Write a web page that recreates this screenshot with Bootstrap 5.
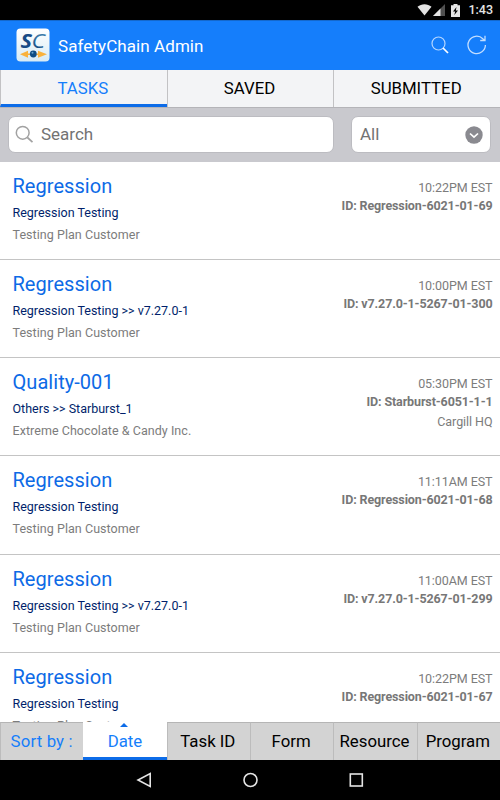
<!DOCTYPE html>
<html lang="en">
<head>
<meta charset="utf-8">
<meta name="viewport" content="width=device-width, initial-scale=1">
<title>SafetyChain Admin</title>
<link href="https://cdn.jsdelivr.net/npm/bootstrap@5.3.0/dist/css/bootstrap.min.css" rel="stylesheet">
<style>
  body { font-family: Roboto, "Liberation Sans", sans-serif; height: 800px; }
  svg { display: block; flex: none; }
  .status-bar { height: 20px; color: #e4e4e4; font-size: 12.5px; font-weight: 500; padding: 0 7px 0 0; }
  .status-signal { margin-left: 1px; }
  .app-bar { height: 50px; background: #157efb; border-top: 1px solid #1468cc; padding: 0 13px 2px 16px; }
  .app-title { font-size: 17px; line-height: 20px; margin: 3px 0 0 8px; letter-spacing: .08px; }
  .refresh-icon { margin-left: 18px; }
  .main-tabs { height: 38px; background: #f3f4f6; border-bottom: 1px solid #b4b4b8; }
  .main-tabs .nav-link { font-size: 16.8px; line-height: 33px; height: 37px; color: #000; border-radius: 0; padding: 2px 2px 0 0; border-left: 1px solid #c2c2c4; }
  .main-tabs .nav-link.active { color: #157efb; border-bottom: 3px solid #0d6ce8; }
  .filter-bar { height: 54px; background: #c9c9ce; padding: 8px 9px 9px 8px; gap: 17px; }
  .field { height: 37px; background: #fff; border: 1px solid #bcbcc1; border-radius: 7px; color: #737373; font-size: 17px; }
  .search-field { width: 326px; padding-left: 6px; }
  .search-field input { font-size: 17px; margin-left: 7px; color: #737373; }
  .search-field input::placeholder { color: #737373; opacity: 1; }
  .type-field { width: 140px; padding: 0 7px 0 8px; }
  .task-list { min-height: 0; }
  .task { height: 98.15px; border-bottom: 1px solid #c4c4c4; padding: 12px 7.5px 0 12.5px; }
  .task-name { font-size: 20px; line-height: 24px; color: #0d6ae6; letter-spacing: .05px; }
  .task-plan { font-size: 12.5px; line-height: 16px; color: #001f6b; margin-top: 7px; }
  .task-customer { font-size: 12.5px; line-height: 16px; color: #7c7c7c; margin-top: 6px; letter-spacing: .05px; }
  .task-meta { font-size: 12.5px; line-height: 18px; color: #7c7c7c; padding-top: 5px; letter-spacing: -.06px; }
  .task-meta b { color: #777; letter-spacing: -.12px; }
  .task-site { margin-top: 2px; }
  .sort-bar { height: 38px; background: #d3d3d3; font-size: 16.8px; }
  .sort-item { width: 83.4px; border-top: 1px solid #b5b5b5; border-left: 1px solid #bcbcbc; color: #000; line-height: 37px; padding-right: 2px; }
  .sort-label { color: #157efb; letter-spacing: .15px; padding-right: 1px; }
  .sort-item.active { background: #fff; color: #157efb; border: 0; border-bottom: 3px solid #0d6ce8; line-height: 38px; padding-right: 0; }
  .sort-arrow { top: 1px; left: 37px; }
  .system-nav { height: 40px; }
</style>
</head>
<body class="d-flex flex-column overflow-hidden bg-white">

<div class="status-bar bg-black d-flex align-items-center justify-content-end flex-shrink-0">
  <svg width="15" height="12" viewBox="0 0 15 12"><path d="M.5 2.700C4.500-.7 10.500-.7 14.500 2.700L7.500 11.500Z" fill="#e4e4e4"/></svg>
  <svg class="status-signal" width="12" height="12" viewBox="0 0 12 12"><path d="M0 12 12 0V12Z" fill="#505050"/><path d="M0 12 7.500 4.500V12Z" fill="#e4e4e4"/></svg>
  <svg width="9" height="13" viewBox="0 0 9 13" style="margin-left:6px"><path d="M0 1.300H2.500V0H6.500V1.300H9V13H0Z" fill="#e4e4e4"/><path d="M5.500 3 2 7.500H4.200L3.300 11 7 6.500H4.800Z" fill="#000"/></svg>
  <span class="ms-2">1:43</span>
</div>

<header class="app-bar navbar flex-nowrap flex-shrink-0 text-white">
  <div class="d-flex align-items-center">
    <svg width="34" height="34" viewBox="0 0 34 34">
      <defs>
        <linearGradient id="tile" x2="0" y2="1"><stop stop-color="#fff"/><stop offset="1" stop-color="#d7ebf5"/></linearGradient>
        <linearGradient id="ink" x2="0" y2="1"><stop stop-color="#5193bd"/><stop offset="1" stop-color="#073e78"/></linearGradient>
      </defs>
      <rect x=".5" y=".5" width="33" height="33" rx="4" fill="url(#tile)"/>
      <text x="4.500" y="19.500" font-family="Open Sans, sans-serif" font-size="20" font-style="italic" font-weight="700" fill="#174b86" textLength="11.500" lengthAdjust="spacingAndGlyphs">S</text>
      <text x="15.500" y="19.500" font-family="Open Sans, sans-serif" font-size="20" font-style="italic" font-weight="500" fill="url(#ink)" textLength="13.500" lengthAdjust="spacingAndGlyphs">C</text>
      <path d="M4 26.300 12 22.800V25.500H22V22.800L31 26.300 22 29.800V27.100H12V29.800Z" fill="#f9b23c"/>
      <circle cx="17.300" cy="26" r="3.400" fill="#0d4c84"/><circle cx="16.500" cy="24.800" r="1" fill="#6aa5cd"/>
    </svg>
    <span class="app-title">SafetyChain Admin</span>
  </div>
  <div class="d-flex align-items-center">
    <svg width="18" height="18" viewBox="0 0 18 18" fill="none" stroke="#fff"><circle cx="7.500" cy="7.500" r="6.500" stroke="#b5d6ff" stroke-width="1.200"/><path d="M12 12 17 17" stroke-width="1.700"/></svg>
    <svg class="refresh-icon" width="20" height="20" viewBox="0 0 20 20" fill="none" stroke="#c3deff" stroke-width="1.300"><path d="M18.400 10A8.700 8.700 0 1 1 15.800 3.700L17.500 5.200M18 .8V5.500H13.200"/></svg>
  </div>
</header>

<nav class="main-tabs nav nav-fill flex-nowrap flex-shrink-0">
  <a class="nav-link active col-4" href="#">TASKS</a>
  <a class="nav-link col-4" href="#">SAVED</a>
  <a class="nav-link col-4" href="#">SUBMITTED</a>
</nav>

<div class="filter-bar d-flex flex-shrink-0">
  <label class="field search-field d-flex align-items-center">
    <svg width="19" height="19" viewBox="0 0 19 19" fill="none" stroke="#a2a2a2" stroke-width="1.500"><circle cx="7.700" cy="7.800" r="6.400"/><path d="M12.400 12.500 17.500 17.200" stroke-width="1.700"/></svg>
    <input class="form-control border-0 shadow-none bg-transparent p-0" type="text" placeholder="Search">
  </label>
  <div class="field type-field d-flex align-items-center justify-content-between">
    <span>All</span>
    <svg width="18" height="18" viewBox="0 0 18 18"><circle cx="9" cy="9" r="8.700" fill="#8a8a90"/><path d="M5 7.500 9 11.200 13 7.500" fill="none" stroke="#fff" stroke-width="1.700"/></svg>
  </div>
</div>

<main class="task-list flex-grow-1 overflow-hidden">
  <article class="task d-flex justify-content-between">
    <div><div class="task-name">Regression</div><div class="task-plan">Regression Testing</div><div class="task-customer">Testing Plan Customer</div></div>
    <div class="task-meta text-end"><div>10:22PM EST</div><b>ID: Regression-6021-01-69</b></div>
  </article>
  <article class="task d-flex justify-content-between">
    <div><div class="task-name">Regression</div><div class="task-plan">Regression Testing &gt;&gt; v7.27.0-1</div><div class="task-customer">Testing Plan Customer</div></div>
    <div class="task-meta text-end"><div>10:00PM EST</div><b>ID: v7.27.0-1-5267-01-300</b></div>
  </article>
  <article class="task d-flex justify-content-between">
    <div><div class="task-name">Quality-001</div><div class="task-plan">Others &gt;&gt; Starburst_1</div><div class="task-customer">Extreme Chocolate &amp; Candy Inc.</div></div>
    <div class="task-meta text-end"><div>05:30PM EST</div><b>ID: Starburst-6051-1-1</b><div class="task-site">Cargill HQ</div></div>
  </article>
  <article class="task d-flex justify-content-between">
    <div><div class="task-name">Regression</div><div class="task-plan">Regression Testing</div><div class="task-customer">Testing Plan Customer</div></div>
    <div class="task-meta text-end"><div>11:11AM EST</div><b>ID: Regression-6021-01-68</b></div>
  </article>
  <article class="task d-flex justify-content-between">
    <div><div class="task-name">Regression</div><div class="task-plan">Regression Testing &gt;&gt; v7.27.0-1</div><div class="task-customer">Testing Plan Customer</div></div>
    <div class="task-meta text-end"><div>11:00AM EST</div><b>ID: v7.27.0-1-5267-01-299</b></div>
  </article>
  <article class="task d-flex justify-content-between">
    <div><div class="task-name">Regression</div><div class="task-plan">Regression Testing</div><div class="task-customer">Testing Plan Customer</div></div>
    <div class="task-meta text-end"><div>10:22PM EST</div><b>ID: Regression-6021-01-67</b></div>
  </article>
</main>

<div class="sort-bar d-flex flex-shrink-0 text-center text-nowrap">
  <div class="sort-item sort-label">Sort by :</div>
  <div class="sort-item active position-relative">
    <svg class="sort-arrow position-absolute" width="8" height="4" viewBox="0 0 8 4"><path d="M0 4 4 0 8 4Z" fill="#0d6ce8"/></svg>Date</div>
  <div class="sort-item">Task ID</div>
  <div class="sort-item">Form</div>
  <div class="sort-item">Resource</div>
  <div class="sort-item">Program</div>
</div>

<footer class="system-nav bg-black d-flex align-items-center flex-shrink-0 justify-content-center">
  <svg width="228" height="18" viewBox="0 0 228 18" fill="none" stroke="#e4e4e4" stroke-width="1.600"><path d="M14.200 2.500V15.500L2 9Z"/><circle cx="114.500" cy="9" r="6.500"/><rect x="214.300" y="3" width="12" height="12"/></svg>
</footer>

<script src="https://cdn.jsdelivr.net/npm/bootstrap@5.3.0/dist/js/bootstrap.bundle.min.js"></script>
</body>
</html>
